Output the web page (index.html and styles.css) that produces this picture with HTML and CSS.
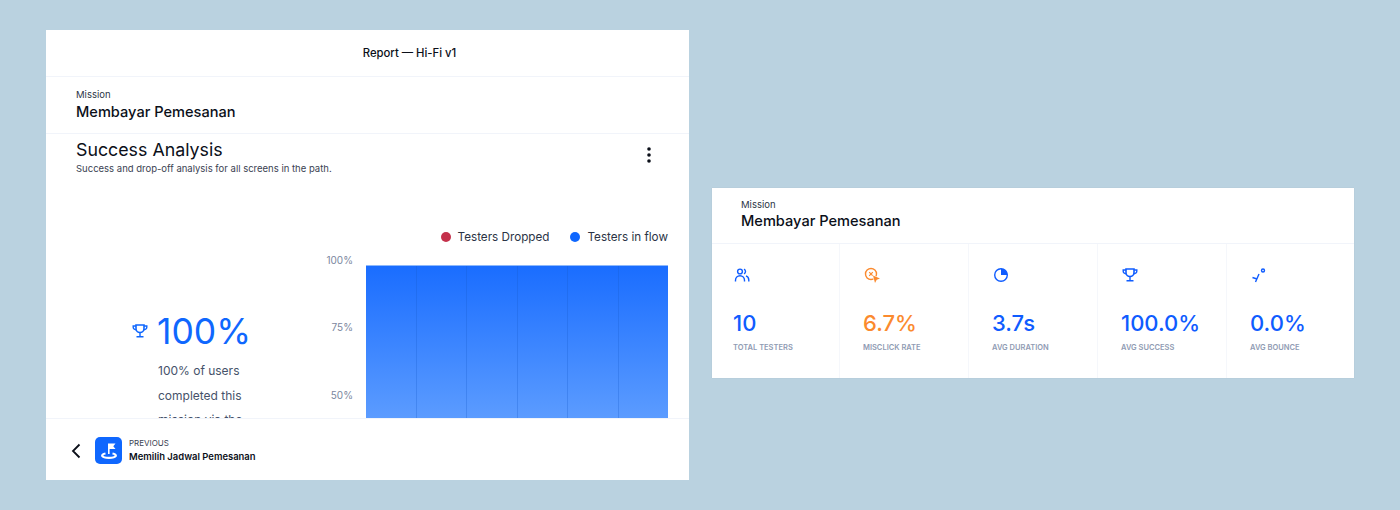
FILE: index.html
```html
<!DOCTYPE html>
<html lang="en">
<head>
    <meta charset="UTF-8">
    <title>Report - Hi-Fi v1</title>
    <link rel="stylesheet" href="styles.css">
</head>
<body>
    <div class="report-card">
        <div class="top-bar">Report — Hi-Fi v1</div>
        <div class="mission">
            <div class="mission-label">Mission</div>
            <div class="mission-name">Membayar Pemesanan</div>
        </div>
        <div class="analysis">
            <div class="analysis-head">
                <div>
                    <h2>Success Analysis</h2>
                    <p>Success and drop-off analysis for all screens in the path.</p>
                </div>
                <svg class="dots" width="6" height="16" viewBox="0 0 6 16"><circle cx="3" cy="2" r="1.8"/><circle cx="3" cy="8" r="1.8"/><circle cx="3" cy="14" r="1.8"/></svg>
            </div>
            <div class="legend">
                <span class="legend-item"><i class="dot dot-red"></i>Testers Dropped</span>
                <span class="legend-item"><i class="dot dot-blue"></i>Testers in flow</span>
            </div>
            <div class="analysis-body">
                <div class="summary">
                    <div class="summary-top">
                        <svg class="summary-icon" width="16" height="16" viewBox="0 0 16 16"><use href="#trophy"/></svg>
                        <span class="summary-value">100%</span>
                    </div>
                    <p>100% of users completed this mission via the</p>
                </div>
                <div class="chart">
                    <div class="y-axis">
                        <span>100%</span>
                        <span>75%</span>
                        <span>50%</span>
                    </div>
                    <div class="plot">
                        <div class="bar"></div>
                        <div class="bar"></div>
                        <div class="bar"></div>
                        <div class="bar"></div>
                        <div class="bar"></div>
                        <div class="bar"></div>
                    </div>
                </div>
            </div>
        </div>
        <div class="prev-bar">
            <svg class="back" width="12" height="16" viewBox="0 0 12 16"><path d="M9.5 1.5 3 8l6.500 6.500"/></svg>
            <div class="prev-icon">
                <svg width="20" height="20" viewBox="0 0 20 20"><path d="M9 2.500h7.500l-2.200 2.700 2.200 2.700H10.600v5.100H9z" fill="#fff"/><path d="M6.500 12.500C4 13 2.800 14 3.200 15c.8 1.300 3.800 1.800 6.800 1.800s6-.5 6.800-1.800c.4-1-.8-2-3.300-2.500" fill="none" stroke="#fff" stroke-width="2.200"/></svg>
            </div>
            <div>
                <div class="prev-label">PREVIOUS</div>
                <div class="prev-name">Memilih Jadwal Pemesanan</div>
            </div>
        </div>
    </div>

    <div class="stats-card">
        <div class="mission mission-stats">
            <div class="mission-label">Mission</div>
            <div class="mission-name">Membayar Pemesanan</div>
        </div>
        <div class="stats">
            <div class="stat">
                <svg class="stat-icon" width="16" height="16" viewBox="0 0 16 16"><circle cx="6" cy="4.500" r="2.400"/><path d="M1.500 14.500v-1.300a4.500 4.500 0 0 1 9 0v1.300"/><path d="M10 2.200a2.500 2.500 0 0 1 0 4.600"/><path d="M12 8.900c1.800.7 2.800 2.200 2.800 4.300v1.300"/></svg>
                <div class="stat-value">10</div>
                <div class="stat-label">Total Testers</div>
            </div>
            <div class="stat stat-orange">
                <svg class="stat-icon" width="18" height="16" viewBox="0 0 18 16"><circle cx="7" cy="7" r="5.500"/><path d="m5.200 5.200 3.600 3.600m0-3.600L5.200 8.800" stroke-width="1.200"/><path d="M9 8.500 16 11.500l-3.300 1.200L11 16z" class="fill cursor"/></svg>
                <div class="stat-value">6.7%</div>
                <div class="stat-label">Misclick Rate</div>
            </div>
            <div class="stat">
                <svg class="stat-icon" width="16" height="16" viewBox="0 0 16 16"><circle cx="8" cy="8" r="6.300"/><path d="M8 1.700A6.300 6.300 0 0 1 14.300 8H8z" class="fill"/></svg>
                <div class="stat-value">3.7s</div>
                <div class="stat-label">Avg Duration</div>
            </div>
            <div class="stat">
                <svg class="stat-icon" width="16" height="16" viewBox="0 0 16 16"><use href="#trophy"/></svg>
                <div class="stat-value">100.0%</div>
                <div class="stat-label">Avg Success</div>
            </div>
            <div class="stat">
                <svg class="stat-icon" width="16" height="16" viewBox="0 0 16 16"><circle cx="12" cy="3.500" r="1.500"/><path d="M4.500 15 8 7"/><path d="M1.500 10.500 6 12"/></svg>
                <div class="stat-value">0.0%</div>
                <div class="stat-label">Avg Bounce</div>
            </div>
        </div>
    </div>

    <svg width="0" height="0" class="defs">
        <symbol id="trophy" viewBox="0 0 16 16">
            <path d="M4 2h8v3.500a4 4 0 0 1-8 0z" fill="none" stroke="currentColor" stroke-width="1.600"/>
            <path d="M4 3H1.200v1.200A2.500 2.500 0 0 0 4 6.700M12 3h2.800v1.200A2.500 2.500 0 0 1 12 6.700M8 9.500v4M4.500 13.800h7" fill="none" stroke="currentColor" stroke-width="1.400"/>
        </symbol>
    </svg>
</body>
</html>
```

FILE: styles.css
```css
* {
    box-sizing: border-box;
}
body {
    margin: 0;
    height: 510px;
    padding: 30px 46px 0;
    display: flex;
    align-items: flex-start;
    gap: 23px;
    background-color: #bad2e0;
    font-family: Inter, "Liberation Sans", sans-serif;
    color: #0b0f19;
    overflow: hidden;
}
.defs {
    position: absolute;
}
.report-card {
    width: 643px;
    height: 450px;
    background: white;
    display: flex;
    flex-direction: column;
    overflow: hidden;
}
.top-bar {
    height: 47px;
    flex: none;
    display: flex;
    align-items: center;
    justify-content: center;
    padding-left: 84px;
    font-size: 11.3px;
    font-weight: 500;
    border-bottom: 1px solid #f1f4fa;
}
.mission {
    height: 57px;
    flex: none;
    padding: 12px 30px 0;
    border-bottom: 1px solid #f1f4fa;
}
.mission-label {
    font-size: 9.5px;
    line-height: 12px;
    color: #2b3446;
}
.mission-name {
    font-size: 14.600px;
    line-height: 20px;
    font-weight: 500;
    margin-top: 1px;
}
.analysis {
    flex: 1;
    min-height: 0;
    overflow: hidden;
    padding: 0 21px 0 30px;
}
.analysis-head {
    display: flex;
    justify-content: space-between;
    align-items: flex-start;
    padding-right: 16px;
}
.analysis-head h2 {
    margin: 3px 0 0;
    font-size: 17.800px;
    line-height: 26px;
    font-weight: 400;
}
.analysis-head p {
    margin: 0;
    font-size: 9.500px;
    line-height: 12px;
    color: #3a4252;
}
.dots {
    margin-top: 13px;
    fill: #0b0f19;
}
.legend {
    display: flex;
    justify-content: flex-end;
    gap: 21px;
    margin-top: 54px;
    font-size: 11.700px;
    line-height: 16px;
    color: #2b3446;
}
.legend-item {
    display: flex;
    align-items: center;
    gap: 7px;
}
.dot {
    width: 10px;
    height: 10px;
    border-radius: 50%;
}
.dot-red {
    background-color: #c4314b;
}
.dot-blue {
    background-color: #0f67fe;
}
.analysis-body {
    display: flex;
    margin-top: 9px;
}
.summary {
    width: 248px;
    flex: none;
    padding: 55px 0 0 56px;
}
.summary-top {
    display: flex;
    align-items: center;
    gap: 9px;
    color: #0f67fe;
}
.summary-icon {
    flex: none;
    margin-top: -3px;
    color: #0f67fe;
}
.summary-value {
    font-size: 35.500px;
    line-height: 46px;
    font-weight: 400;
}
.summary p {
    margin: 4px 0 0 26px;
    width: 100px;
    font-size: 12px;
    line-height: 24.500px;
    color: #46526a;
}
.chart {
    flex: 1;
    display: flex;
    gap: 13px;
}
.y-axis {
    width: 29px;
    flex: none;
    display: flex;
    flex-direction: column;
    align-items: flex-end;
    font-size: 10px;
    color: #7a869e;
}
.y-axis span {
    height: 67.300px;
    line-height: 12px;
}
.plot {
    flex: 1;
    height: 160px;
    margin-top: 11px;
    display: flex;
    border-top: 1px solid #8db8fb;
    background: linear-gradient(#1a6dff, #5c9cff 153px, #5c9cff);
}
.bar {
    flex: 1;
    border-right: 1px solid rgba(20, 90, 200, 0.28);
}
.bar:last-child {
    border-right: none;
}
.prev-bar {
    height: 62px;
    flex: none;
    display: flex;
    align-items: center;
    padding: 2px 0 0 24px;
    border-top: 1px solid #f1f4fa;
}
.back {
    fill: none;
    stroke: #0b0f19;
    stroke-width: 1.800;
    margin-right: 13px;
}
.prev-icon {
    width: 27px;
    height: 27px;
    margin-right: 7px;
    border-radius: 5px;
    background-color: #0f67fe;
    display: flex;
    align-items: center;
    justify-content: center;
}
.prev-label {
    font-size: 8px;
    line-height: 11px;
    color: #3a4252;
}
.prev-name {
    font-size: 9.450px;
    line-height: 14px;
    font-weight: 600;
    margin-top: 1px;
}
.stats-card {
    width: 642px;
    height: 190px;
    margin-top: 158px;
    background: white;
    box-shadow: 0 0 1px rgba(0, 0, 0, 0.1);
}
.mission-stats {
    height: 56px;
    padding: 11px 29px 0;
}
.mission-stats .mission-name {
    margin-top: 0;
}
.stats {
    display: grid;
    grid-template-columns: 128px 129px 129px 129px 1fr;
    height: 134px;
}
.stat {
    padding: 23px 0 0 23px;
    border-right: 1px solid #f5f7fb;
    color: #0f5cff;
}
.stat:first-child {
    padding-left: 21px;
}
.stat:last-child {
    border-right: none;
}
.stat-orange {
    color: #fb8a2e;
}
.stat-icon {
    display: block;
    margin-left: 1px;
    fill: none;
    stroke: currentColor;
    stroke-width: 1.400;
}
.stat-icon .fill {
    fill: currentColor;
    stroke: none;
}
.stat-icon .cursor {
    stroke: white;
    stroke-width: 1;
    paint-order: stroke;
}
.stat-value {
    margin-top: 26px;
    font-size: 22px;
    line-height: 28px;
    font-weight: 500;
}
.stat-label {
    margin-top: 6px;
    font-size: 7.500px;
    line-height: 10px;
    font-weight: 600;
    text-transform: uppercase;
    color: #8f9bb3;
}
```
